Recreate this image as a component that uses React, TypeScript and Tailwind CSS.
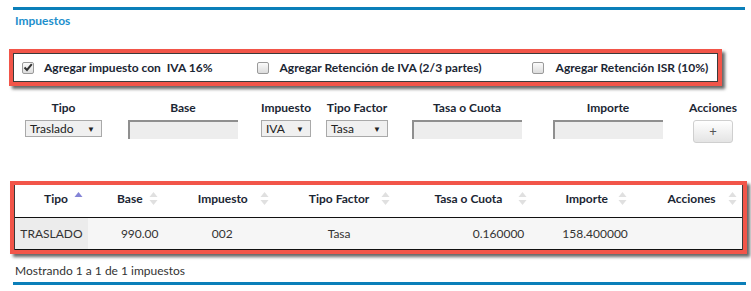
import React from "react";

const FONT = { fontFamily: "Lato, 'Open Sans', sans-serif" };

function Check({ on }: { on?: boolean }) {
  return (
    <span className="inline-flex h-[12px] w-[12px] shrink-0 items-center justify-center rounded-[2px] border border-[#9a9a9a] bg-gradient-to-b from-[#fbfbfb] to-[#dcdcdc]">
      {on && (
        <svg width="10" height="9" viewBox="0 0 10 9">
          <path d="M1.5 4.5 L4 7 L8.8 1.2" fill="none" stroke="#333" strokeWidth="2" />
        </svg>
      )}
    </span>
  );
}

function Select({ label, w }: { label: string; w: string }) {
  return (
    <div className={`flex h-[17px] items-center justify-between border border-[#a9a9a9] bg-[#f0f0f0] pl-[4px] pr-[6px] text-[12px] text-[#222] ${w}`}>
      <span>{label}</span>
      <span className="text-[8px] leading-none">▼</span>
    </div>
  );
}

function Field({ w }: { w: string }) {
  return <div className={`h-[19px] border-l-2 border-t-2 border-l-[#8f8f8f] border-t-[#8f8f8f] bg-[#ededed] ${w}`} />;
}

function Sort({ active }: { active?: boolean }) {
  if (active)
    return (
      <svg width="9" height="14" viewBox="0 0 9 14" className="absolute right-[5px] top-[7px]">
        <path d="M0.5 5 L4.5 0 L8.5 5 Z" fill="#8484d6" />
      </svg>
    );
  return (
    <svg width="9" height="14" viewBox="0 0 9 14" className="absolute right-[5px] top-[7px]">
      <path d="M0.5 5 L4.5 0 L8.5 5 Z" fill="#e0e0e0" />
      <path d="M0.5 8 L4.5 13 L8.5 8 Z" fill="#e0e0e0" />
    </svg>
  );
}

const cols = [
  { h: "Tipo", w: "w-[73px]", active: true },
  { h: "Base", w: "w-[75px]" },
  { h: "Impuesto", w: "w-[111px]" },
  { h: "Tipo Factor", w: "w-[122px]" },
  { h: "Tasa o Cuota", w: "w-[137px]" },
  { h: "Importe", w: "w-[100px]" },
  { h: "Acciones", w: "w-[110px]" },
];

export default function App() {
  return (
    <div className="relative h-[291px] w-[751px] overflow-hidden bg-white text-[#1b2633]" style={FONT}>
      <div className="ml-[13px] mt-[7px] h-[3px] w-[732px] bg-[#0b7fb9]" />
      <div className="ml-[15px] mt-[4px] text-[12px] font-bold leading-[14px] text-[#1d8fcc]">Impuestos</div>

      <div className="ml-[9px] mt-[21px] w-[713px] border-4 border-[#f25549] shadow-[3px_3px_3px_rgba(0,0,0,0.6)]">
        <div className="flex h-[29px] items-center border border-[#3a3a3a] text-[12px] font-bold">
          <div className="ml-[8px] flex items-center gap-[10px]">
            <Check on />
            <span>Agregar impuesto con &nbsp;IVA 16%</span>
          </div>
          <div className="ml-[44px] flex items-center gap-[11px]">
            <Check />
            <span>Agregar Retención de IVA (2/3 partes)</span>
          </div>
          <div className="ml-[50px] flex items-center gap-[12px]">
            <Check />
            <span>Agregar Retención ISR (10%)</span>
          </div>
        </div>
      </div>

      <div className="mt-[15px] flex text-[12px]">
        <div className="ml-[25px] flex w-[77px] flex-col items-center gap-[5px]">
          <span className="font-bold leading-[14px]">Tipo</span>
          <Select label="Traslado" w="w-[77px]" />
        </div>
        <div className="ml-[26px] flex w-[110px] flex-col items-center gap-[5px]">
          <span className="font-bold leading-[14px]">Base</span>
          <Field w="w-[110px]" />
        </div>
        <div className="ml-[23px] flex w-[50px] flex-col items-center gap-[5px]">
          <span className="font-bold leading-[14px]">Impuesto</span>
          <Select label="IVA" w="w-[50px]" />
        </div>
        <div className="ml-[15px] flex w-[62px] flex-col items-center gap-[5px]">
          <span className="whitespace-nowrap font-bold leading-[14px]">Tipo Factor</span>
          <Select label="Tasa" w="w-[62px]" />
        </div>
        <div className="ml-[24px] flex w-[110px] flex-col items-center gap-[5px]">
          <span className="font-bold leading-[14px]">Tasa o Cuota</span>
          <Field w="w-[110px]" />
        </div>
        <div className="ml-[31px] flex w-[110px] flex-col items-center gap-[5px]">
          <span className="font-bold leading-[14px]">Importe</span>
          <Field w="w-[110px]" />
        </div>
        <div className="ml-[25px] flex w-[50px] flex-col items-center gap-[5px]">
          <span className="font-bold leading-[14px]">Acciones</span>
          <div className="flex h-[23px] w-[40px] items-center justify-center rounded-[3px] border border-[#cfcfcf] bg-gradient-to-b from-white to-[#e4e4e4] text-[13px] text-[#555]">
            +
          </div>
        </div>
      </div>

      <div className="ml-[10px] mt-[38px] w-[737px] border-4 border-[#f25549] shadow-[3px_3px_3px_rgba(0,0,0,0.6)]">
        <div className="border-x border-[#3a3a3a]">
          <div className="flex h-[33px] border-b border-[#111] text-[12px] font-bold">
            {cols.map((c) => (
              <div key={c.h} className={`relative flex items-center justify-center pb-[4px] pl-[9px] ${c.w}`}>
                {c.h}
                <Sort active={c.active} />
              </div>
            ))}
          </div>
          <div className="flex h-[32px] items-center border-b border-[#111] bg-[#f6f6f6] text-[12px] text-[#333]">
            <div className="flex h-full w-[73px] items-center justify-center bg-[#ececec]">TRASLADO</div>
            <div className="w-[75px] pl-[33px]">990.00</div>
            <div className="w-[111px] pl-[49px]">002</div>
            <div className="w-[122px] pl-[54px]">Tasa</div>
            <div className="w-[137px] pr-[8px] text-right">0.160000</div>
            <div className="w-[100px] pl-[30px]">158.400000</div>
            <div className="w-[110px]" />
          </div>
        </div>
      </div>

      <div className="ml-[15px] mt-[10px] text-[12px] leading-[14px] text-[#333]">Mostrando 1 a 1 de 1 impuestos</div>
      <div className="ml-[13px] mt-[4px] h-[3px] w-[733px] bg-[#0b7fb9]" />
    </div>
  );
}
